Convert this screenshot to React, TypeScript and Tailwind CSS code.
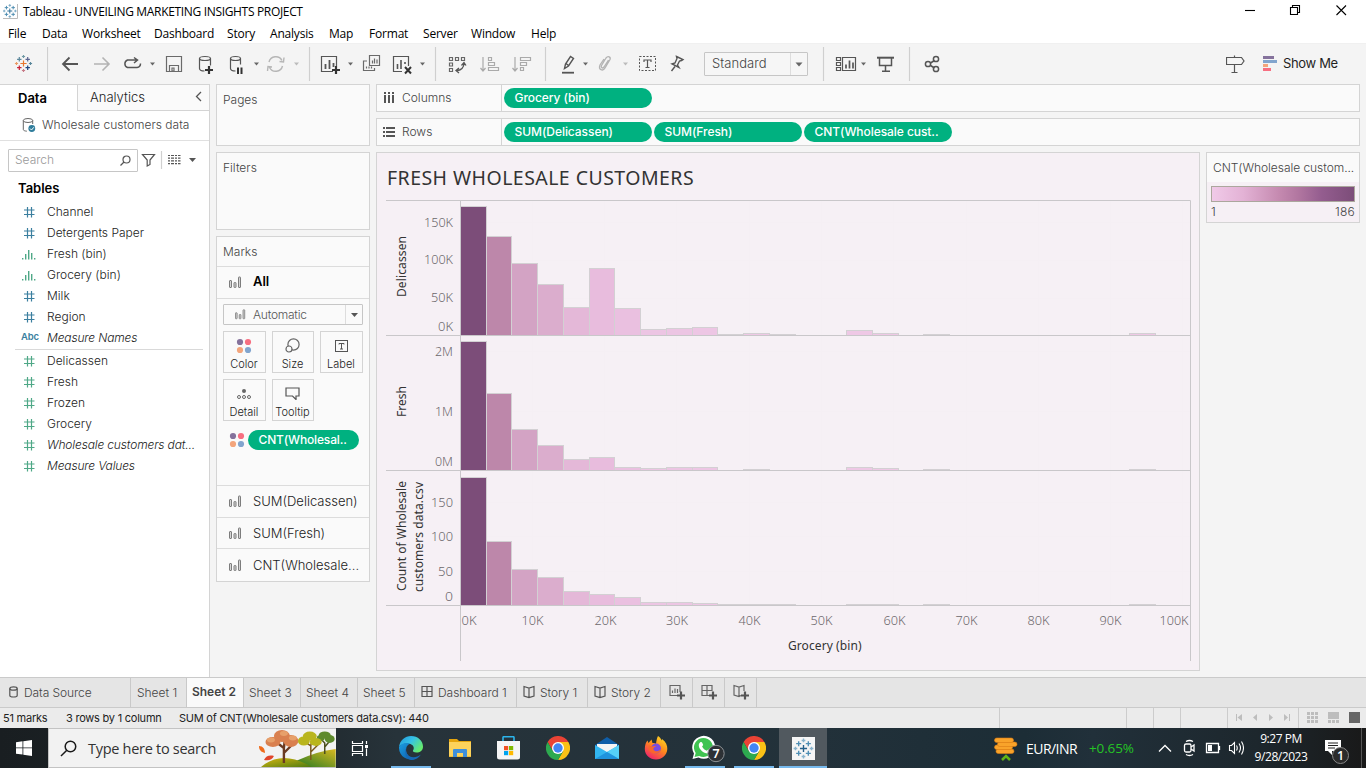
import React from "react";

const UI = "font-['Inter',sans-serif]";
const WIN = "font-['Open_Sans','Noto_Sans',sans-serif]";

/* ---------- shared marks ---------- */

function TableauMark({ cx, cy, s, colors }: { cx: number; cy: number; s: number; colors: string[] }) {
  const pts: [number, number, number][] = [
    [0, 0, 3.1], [-4.2, -4.2, 2.2], [4.2, -4.2, 2.2], [-4.2, 4.2, 2.2], [4.2, 4.2, 2.2],
    [0, -7, 1.6], [0, 7, 1.6], [-7, 0, 1.6], [7, 0, 1.6],
  ];
  return (
    <g strokeWidth={1.2 * s}>
      {pts.map(([x, y, r], i) => (
        <path
          key={i}
          stroke={colors[i % colors.length]}
          d={`M${cx + (x - r) * s} ${cy + y * s}h${2 * r * s}M${cx + x * s} ${cy + (y - r) * s}v${2 * r * s}`}
        />
      ))}
    </g>
  );
}

function BarsIcon({ className = "" }: { className?: string }) {
  return (
    <svg width="13" height="13" viewBox="0 0 13 13" fill="#d5d5d5" stroke="#7d7d7d" className={className}>
      <rect x="0.5" y="4.500" width="2" height="7" rx="0.500" />
      <rect x="5" y="6.500" width="2" height="5" rx="0.500" />
      <rect x="9.500" y="1" width="2" height="10.500" rx="0.500" />
    </svg>
  );
}

function ColorDots() {
  return (
    <svg width="16" height="16" viewBox="0 0 16 16">
      <circle cx="4" cy="4" r="3.100" fill="#85729c" />
      <circle cx="12" cy="4" r="3.100" fill="#f76f81" />
      <circle cx="4" cy="12" r="3.100" fill="#f3a57c" />
      <circle cx="12" cy="12" r="3.100" fill="#82a5ce" />
    </svg>
  );
}

/* ---------- toolbar ---------- */

function Tool({ x, w, color = "#555555", children }: { x: number; w: number; color?: string; children?: React.ReactNode }) {
  return (
    <svg width={w} height="40" viewBox={`${x} 44 ${w} 40`} fill="none" stroke={color} strokeWidth="1.2" className="shrink-0">
      {children}
    </svg>
  );
}

function Caret({ x, y = 64, color = "#666" }: { x: number; y?: number; color?: string }) {
  return <path d={`M${x - 2.5} ${y - 1.5}h5l-2.500 3z`} fill={color} stroke="none" />;
}

function Toolbar() {
  return (
    <div className="flex h-[41px] shrink-0 items-stretch border-t border-[#f0f0f0] bg-[#f4f4f4]">
      <Tool x={0} w={47}>
        <TableauMark cx={23.500} cy={63.500} s={1} colors={["#e8762d", "#5b879b", "#5b6591", "#c72035", "#1f457e", "#7099a5", "#c77a87", "#eb9a63", "#59879b"]} />
      </Tool>
      <Tool x={47} w={43}>
        <path d="M47.500 47v34" stroke="#cfcfcf" />
        <path d="M78 64H63M69.500 57.500L63 64l6.500 6.500" strokeWidth="1.800" />
      </Tool>
      <Tool x={90} w={27} color="#b3b3b3">
        <path d="M94 64h15M102.500 57.500L109 64l-6.500 6.500" strokeWidth="1.600" />
      </Tool>
      <Tool x={117} w={43}>
        <path d="M137 60h-9.500a4 4 0 0 0 0 7.500h9.500a4 4 0 0 0 3.500-4M134 57.500l3.500 2.500-3.500 3" strokeWidth="1.500" />
        <Caret x={152.500} />
      </Tool>
      <Tool x={160} w={30} color="#6a6a6a">
        <path d="M166.500 56.500h15v15h-15zM169.500 71v-5.500h9V71M172 68h2v3h-2z" />
      </Tool>
      <Tool x={190} w={32}>
        <path d="M199.500 58.500v10c0 1.500 2 2.500 5 2.500M210.500 58.500v7" />
        <ellipse cx="205" cy="58.500" rx="5.500" ry="2" />
        <path d="M209 66v8M205 70h8" strokeWidth="2.200" stroke="#333" />
      </Tool>
      <Tool x={222} w={41}>
        <path d="M230.500 58.500v10c0 1.500 2 2.500 5 2.500M240.500 58.500v6" />
        <ellipse cx="235.500" cy="58.500" rx="5" ry="2" />
        <path d="M238 67.500v6.500M241.500 67.500v6.500" strokeWidth="2" stroke="#333" />
        <Caret x={256.500} />
      </Tool>
      <Tool x={263} w={40} color="#b6b6b6">
        <path d="M269 62a7 7 0 0 1 13-1.500M282.500 66a7 7 0 0 1-13 1.500M279.500 61.500l4 .5.500-4.500M272 67l-4-.5-.5 4.500" strokeWidth="1.400" />
        <Caret x={296.500} color="#bbb" />
      </Tool>
      <Tool x={303} w={53}>
        <path d="M309.500 47v34" stroke="#cfcfcf" />
        <path d="M333 71.500h-11.500v-15h15V66" />
        <path d="M325.500 69v-5M329.500 69v-9M333.500 67v-4" strokeWidth="1.800" />
        <path d="M336 66v8M332 70h8" strokeWidth="2.200" stroke="#333" />
        <Caret x={350.500} />
      </Tool>
      <Tool x={356} w={30} color="#6a6a6a">
        <path d="M369.500 55.500h10v10h-10zM367 61h-3.500v9.500h11V68M372.500 63.500v-3M374.500 63.500v-5M377 63.500v-4M366.500 68.500v-2M369 68.500v-2M371.500 68.500v-2" />
      </Tool>
      <Tool x={386} w={44}>
        <path d="M402 71.500h-8.500v-15h15V66" />
        <path d="M397.500 69v-5M401 69v-9M405 64v-2" strokeWidth="1.600" />
        <path d="M405 67l6 6.500M411 67l-6 6.500" strokeWidth="2" stroke="#333" />
        <Caret x={422.500} />
      </Tool>
      <Tool x={430} w={43}>
        <path d="M435.500 47v34" stroke="#cfcfcf" />
        <path d="M449.500 57.500h3v3h-3zM455.500 57.500h3v3h-3zM461.500 57.500h3v3h-3zM449.500 63h3v3h-3zM449.500 68.500h3v3h-3z" stroke="#666" />
        <path d="M464 63.500c0 4-3 7-7 7M461.500 65.500l2.500-3 2 3M459 68l-3 2.500 3 2.500" strokeWidth="1.300" />
      </Tool>
      <Tool x={473} w={33} color="#aaa">
        <path d="M483 57v14M480.500 68l2.500 3 2.500-3M488.500 57.500h3v3h-3zM488.500 62.500h6v3h-6zM488.500 67.500h10v3h-10z" />
      </Tool>
      <Tool x={506} w={44} color="#aaa">
        <path d="M515 57v14M512.500 68l2.500 3 2.500-3M520.500 57.500h10v3h-10zM520.500 62.500h6v3h-6zM520.500 67.500h3v3h-3z" />
        <path d="M545.500 47v34" stroke="#cfcfcf" />
      </Tool>
      <Tool x={550} w={43}>
        <path d="M564.500 68.500l1-4.500 5-7.500 3 2-5 7.500zM566 63.500l2.500 2" strokeWidth="1.400" />
        <path d="M562 72.700h12" strokeWidth="1.800" />
        <Caret x={585.500} />
      </Tool>
      <Tool x={593} w={41} color="#b3b3b3">
        <path d="M608.500 60l-4.500 7c-1.500 2-3.500.5-2.500-1.500l4.500-7.500c2-2.500 5-1 4 1.500l-5 8.500c-2 3.500-7 2-5-3l4-6" strokeWidth="1.300" />
        <Caret x={625.500} color="#bbb" />
      </Tool>
      <Tool x={634} w={29}>
        <rect x="639.500" y="56.500" width="16" height="14" strokeDasharray="2 1.500" strokeWidth="1" />
        <path d="M644 62v-2h7v2M647.500 60v7.500M645.500 67.500h4" />
      </Tool>
      <Tool x={663} w={41}>
        <path d="M676.500 56.500l6.500 3-1.500 1-2 .5-2 4 1.500 2.500-7-3.500 3-1 2-4.500zM675 66.500l-3.500 4.500" strokeWidth="1.400" />
      </Tool>
      <div className="mt-[8px] flex h-6 w-[104px] items-center rounded-[1px] border border-[#c6c6c6] bg-[#f6f6f6] pb-px text-[13px]">
        <span className="w-[85px] pl-[7px] tracking-[0.05px] font-light text-[#444]">Standard</span>
        <svg width="17" height="22" viewBox="0 0 17 22"><path d="M0.500 0v22" stroke="#ddd" /><path d="M5.500 9.500h7l-3.500 4z" fill="#666" /></svg>
      </div>
      <Tool x={808} w={62}>
        <path d="M823.500 47v34" stroke="#cfcfcf" />
        <path d="M836.500 57.500h4v3h-4zM836.500 62.500h4v3h-4zM836.500 67.500h4v3h-4zM842.500 57.500h13v13h-13z" />
        <path d="M846 68.500v-4M849.500 68.500v-8M853 68.500v-6" strokeWidth="1.700" />
        <Caret x={863.500} />
      </Tool>
      <Tool x={870} w={33}>
        <path d="M877 57.700h17" strokeWidth="2" />
        <path d="M879.500 58v7.500h12V58M885.500 65.500v5.500M882 71.200h8" strokeWidth="1.500" />
      </Tool>
      <Tool x={903} w={45}>
        <path d="M909.500 47v34" stroke="#cfcfcf" />
        <path d="M930.500 63l4-2.500M930.500 65.500l4 2.500" strokeWidth="1.500" />
        <g strokeWidth="1.500"><circle cx="928" cy="64" r="2.600" /><circle cx="936" cy="59" r="2.600" /><circle cx="936" cy="69" r="2.600" /></g>
      </Tool>
      <Tool x={948} w={278} />
      <Tool x={1226} w={34}>
        <path d="M1226.500 57.500h15l2.500 3.500-2.500 3.500h-15zM1234.500 55.500v2M1234.500 64.500v8M1231.500 72.500h6" strokeWidth="1.200" />
      </Tool>
      <Tool x={1260} w={23}>
        <g stroke="none">
          <path d="M1263 56h11v3h-11z" fill="#85729c" /><path d="M1263 60h14v3h-14z" fill="#82a5ce" />
          <path d="M1263 64h5v3h-5z" fill="#f3a57c" /><path d="M1263 68h8v3h-8z" fill="#f76f81" />
        </g>
      </Tool>
      <span className="pt-[9px] text-[13px] leading-5 tracking-[-0.350px] text-[#1f1f1f]">Show Me</span>
    </div>
  );
}

/* ---------- data pane ---------- */

type Kind = "dim" | "mea" | "bin" | "abc";

function FieldIcon({ kind }: { kind: Kind }) {
  if (kind === "abc") return <span className="w-[26px] text-[9.500px] font-semibold not-italic text-[#3b7f9f]">Abc</span>;
  if (kind === "bin")
    return (
      <svg width="26" height="14" viewBox="0 0 26 14" stroke="#4fa887" strokeWidth="1.400">
        <path d="M1.700 11v1.500M4.700 7v5.500M7.700 3v9.500M10.700 6v6.500M13.700 11v1.500" />
      </svg>
    );
  return (
    <svg width="26" height="14" viewBox="0 0 26 14" stroke={kind === "dim" ? "#3b7f9f" : "#4fa887"} strokeWidth="1.200">
      <path d="M3 5h10.500M3 9.500h10.500M6.500 2v10.500M10.500 2v10.500" />
    </svg>
  );
}

function Field({ kind, name, italic }: { kind: Kind; name: string; italic?: boolean }) {
  return (
    <div className={`flex h-[21px] items-center pl-[21px] text-[12px] text-[#1c1c1c] ${italic ? "italic tracking-[-0.150px]" : "tracking-[0px]"}`}>
      <FieldIcon kind={kind} />
      <span className="font-light whitespace-nowrap">{name}</span>
    </div>
  );
}

function DataPane() {
  return (
    <div className="flex w-[210px] shrink-0 flex-col border-t border-r border-[#d4d4d4] bg-white">
      <div className="flex h-[26px] shrink-0 text-[13px]">
        <div className="w-[77px] pl-[18px] text-[13px] leading-[26px] font-semibold text-black">Data</div>
        <div className="flex flex-1 items-center justify-between border-b border-l border-[#d4d4d4] bg-[#fafafa] pr-[7px] pl-3 text-[#222]">
          <span className="font-light">Analytics</span>
          <svg width="7" height="11" viewBox="0 0 7 11" fill="none" stroke="#555" strokeWidth="1.300" className="mb-0.5"><path d="M6 1L1.500 5.500 6 10" /></svg>
        </div>
      </div>
      <div className="flex h-[30px] shrink-0 items-center border-b border-[#e0e0e0] pb-px pl-[22px] text-[12px] text-[#444]">
        <svg width="14" height="16" viewBox="0 0 14 16" fill="none" stroke="#666" className="mr-1.5">
          <ellipse cx="6" cy="3.500" rx="4.700" ry="2" /><path d="M1.300 3.500v9c0 1 1.500 1.500 3.500 1.700M10.700 3.500V7" />
          <circle cx="9.800" cy="11.500" r="3.400" fill="#2f7d9c" stroke="none" /><path d="M8 11.500l1.500 1.500 2.300-2.700" stroke="#fff" />
        </svg>
        <span className="font-light">Wholesale customers data</span>
      </div>
      <div className="mt-[7px] flex h-6 shrink-0 items-center pl-2">
        <div className="flex h-[23px] w-[130px] items-center justify-between rounded-[1px] border border-[#c6c6c6] pr-1.5 pl-1.5 text-[12px] text-[#999]">
          <span className="font-light">Search</span>
          <svg width="11" height="11" viewBox="0 0 11 11" fill="none" stroke="#555" strokeWidth="1.200"><circle cx="6.500" cy="4.500" r="3.500" /><path d="M4 7L.5 10.500" /></svg>
        </div>
        <svg width="65" height="24" viewBox="138 148 65 24" fill="none" stroke="#555" strokeWidth="1.200">
          <path d="M142.500 154.500h12l-4.500 5.500v4.500l-2.800 1.500v-6z" />
          <path d="M161.500 151v18" stroke="#d0d0d0" />
          <path d="M168 155.500h12.500M168 158.200h12.500M168 160.900h12.500M168 163.600h12.500" strokeDasharray="2 1 3 1" />
          <path d="M189 158h7l-3.500 4z" fill="#555" stroke="none" />
        </svg>
      </div>
      <div className="mt-[5px] h-[24px] pl-[18px] text-[13px] leading-[22px] font-semibold text-black">Tables</div>
      <Field kind="dim" name="Channel" />
      <Field kind="dim" name="Detergents Paper" />
      <Field kind="bin" name="Fresh (bin)" />
      <Field kind="bin" name="Grocery (bin)" />
      <Field kind="dim" name="Milk" />
      <Field kind="dim" name="Region" />
      <Field kind="abc" name="Measure Names" italic />
      <div className="mt-px mr-[6px] ml-[15px] h-px shrink-0 bg-[#d9d9d9]" />
      <Field kind="mea" name="Delicassen" />
      <Field kind="mea" name="Fresh" />
      <Field kind="mea" name="Frozen" />
      <Field kind="mea" name="Grocery" />
      <Field kind="mea" name="Wholesale customers dat..." italic />
      <Field kind="mea" name="Measure Values" italic />
    </div>
  );
}

/* ---------- shelves and marks card ---------- */

const card = "border border-[#d4d4d4] bg-[#fafafa]";

function MarkButton({ label, children }: { label: string; children: React.ReactNode }) {
  return (
    <div className="flex h-[42px] flex-col items-center border border-[#d4d4d4] bg-[#fafafa] pr-px">
      <div className="flex h-[25px] items-center pt-0.5">{children}</div>
      <span className="text-[11px] leading-[14px] font-light text-[#1c1c1c]">{label}</span>
    </div>
  );
}

function MarksCard() {
  return (
    <div className={`flex h-[346px] flex-col ${card}`}>
      <div className="h-[30px] shrink-0 border-b border-[#dcdcdc] pl-[6px] text-[12px] leading-[29px] font-light text-[#444]">Marks</div>
      <div className="flex h-8 shrink-0 items-center border-b border-[#dcdcdc] pb-px pl-3 text-[13px] font-semibold text-black">
        <BarsIcon className="mr-[11px]" />All
      </div>
      <div className="h-[187px] shrink-0 border-b border-[#dcdcdc] px-1.5 pt-[5px]">
        <div className="flex h-[21px] items-center rounded-[1px] border border-[#c6c6c6] pl-[11px] text-[12px] text-[#555]">
          <BarsIcon className="mr-[7px] w-[11px]" />
          <span className="w-[91px] font-light tracking-[-0.250px]">Automatic</span>
          <svg width="18" height="19" viewBox="0 0 18 19"><path d="M1.500 0v19" stroke="#ddd" /><path d="M7 8h7l-3.500 4z" fill="#555" /></svg>
        </div>
        <div className="mt-1.5 grid grid-cols-[43px_42px_43px] gap-1.5">
          <MarkButton label="Color"><ColorDots /></MarkButton>
          <MarkButton label="Size">
            <svg width="15" height="15" viewBox="0 0 15 15" fill="none" stroke="#666" strokeWidth="1.200"><circle cx="8.500" cy="6.500" r="5.600" /><circle cx="4" cy="11" r="3" fill="#fafafa" /></svg>
          </MarkButton>
          <MarkButton label="Label">
            <svg width="13" height="12" viewBox="0 0 13 12" fill="none" stroke="#555"><rect x="0.500" y="0.500" width="12" height="11" /><path d="M4 4.500v-1h5v1M6.500 3.500V9M5 9h3" /></svg>
          </MarkButton>
          <MarkButton label="Detail">
            <svg width="14" height="12" viewBox="0 0 14 12" fill="none" stroke="#666"><circle cx="7" cy="3" r="2" fill="#666" stroke="none" /><circle cx="2" cy="9" r="1.500" /><circle cx="7" cy="9" r="1.500" /><circle cx="12" cy="9" r="1.500" /></svg>
          </MarkButton>
          <MarkButton label="Tooltip">
            <svg width="15" height="13" viewBox="0 0 15 13" fill="none" stroke="#555" strokeWidth="1.200"><path d="M1 1h13v8h-3v3.500L7.500 9H1z" /></svg>
          </MarkButton>
        </div>
        <div className="mt-[9px] flex h-5 items-center pl-1.5">
          <ColorDots />
          <div className="ml-[3px] h-5 w-[111px] rounded-full bg-[#00b180] pl-[10.500px] text-[12px] leading-5 font-medium tracking-[-0.150px] text-white">CNT(Wholesal..</div>
        </div>
      </div>
      {["SUM(Delicassen)", "SUM(Fresh)", "CNT(Wholesale..."].map((t, i) => (
        <div key={t} className={`flex h-8 items-center pt-px pl-3 text-[13px] text-[#1c1c1c] ${i < 2 ? "border-b border-[#dcdcdc]" : ""}`}>
          <BarsIcon className="mr-[11px]" /><span className="font-light">{t}</span>
        </div>
      ))}
    </div>
  );
}

function Pill({ children }: { children: React.ReactNode }) {
  return <div className="h-5 w-[148px] rounded-full bg-[#00b180] pl-[10.500px] text-[12px] leading-5 font-medium tracking-[-0.060px] text-white">{children}</div>;
}

function Shelf({ label, icon, pills }: { label: string; icon: React.ReactNode; pills: string[] }) {
  return (
    <div className={`flex h-7 items-center ${card}`}>
      <div className="flex h-full w-[125px] items-center border-r border-[#d4d4d4] pl-1.5 text-[12px] font-light text-[#444]">{icon}{label}</div>
      <div className="flex gap-0.5 pl-0.5">{pills.map((p) => <Pill key={p}>{p}</Pill>)}</div>
    </div>
  );
}

/* ---------- chart ---------- */

const EDGES = [460.5, 486.5, 511.5, 537.5, 563.5, 589.5, 614.5, 640.5, 666.5, 692.5, 717.5, 743.5, 769.5, 795.5];
const FILLS = ["#7c4d79", "#bd87aa", "#d3a3c4", "#dbadcd", "#e4b8d8", "#e8bcdd", "#eac0e0", "#ecc5e3", "#ecc5e3", "#edc6e4", "#eec8e5", "#eec8e5", "#eec8e5"];
const TAIL: [number, number][] = [[846.5, 872.5], [872.5, 898.5], [923.5, 949.5], [1129.5, 1155.5]];

const PANES = [
  { base: 335.5, tops: [206.5, 236.5, 263.5, 284.5, 307.5, 268.5, 308.5, 329.5, 328.5, 327.5, 334.5, 333.5, 334.5], tail: [330.5, 333.5, 334.5, 333.5] },
  { base: 470.5, tops: [341.5, 393.5, 429.5, 445.5, 459.5, 457.5, 467.5, 468.5, 467.5, 467.5, 470.5, 469.5, 470.5], tail: [467.5, 468.5, 469.5, 469.5] },
  { base: 605.5, tops: [477.5, 541.5, 569.5, 577.5, 591.5, 594.5, 597.5, 602.5, 602.5, 603.5, 604.5, 604.5, 604.5], tail: [604.5, 604.5, 604.5, 604.5] },
];

const Y_TICKS: [string, number, number][] = [
  ["150K", 227, 29], ["100K", 264, 29], ["50K", 302, 22], ["0K", 331, 15],
  ["2M", 356, 18], ["1M", 416, 18], ["0M", 466, 18],
  ["150", 507, 22], ["100", 541, 22], ["50", 576, 15], ["0", 601, 8],
];
const X_TICKS: [string, number, number][] = [
  ["0K", 461.5, 15], ["10K", 521.5, 22], ["20K", 594.5, 22], ["30K", 666, 22], ["40K", 738.5, 22], ["50K", 810.5, 22],
  ["60K", 883.5, 22], ["70K", 955.5, 22], ["80K", 1027.5, 22], ["90K", 1099.5, 22], ["100K", 1159.5, 29],
];

function Chart() {
  const bars = PANES.flatMap(({ base, tops, tail }) => [
    ...tops.map((y, i) => ({ x0: EDGES[i], x1: EDGES[i + 1], y, base, fill: FILLS[i] })),
    ...tail.map((y, i) => ({ x0: TAIL[i][0], x1: TAIL[i][1], y, base, fill: "#eec8e5" })),
  ]);
  return (
    <svg width="806" height="462" viewBox="386 200 806 462" className="ml-[9px] font-['Noto_Sans',sans-serif] text-[12.500px]">
      <g stroke="#f5eff4">
        {[532.5, 604.5, 676.5, 749.5, 821.5, 893.5, 966.5, 1038.5, 1110.5, 1182.5].map((x) => <path key={x} d={`M${x} 201V605`} />)}
        {[222.5, 260.5, 298.5, 351.5, 411.5, 502.5, 536.5, 571.5].map((y) => <path key={y} d={`M461 ${y}H1190`} />)}
      </g>
      <g stroke="#d3d0d3">
        {bars.filter((b) => b.y < b.base).map((b, i) => (
          <rect key={i} x={b.x0} y={b.y} width={b.x1 - b.x0} height={b.base - b.y} fill={b.fill} />
        ))}
      </g>
      <path d="M386 200.500H1190.500V661M386 335.500h804M386 470.500h804M386 605.500h804M460.500 200V661" stroke="#c9c7ca" fill="none" />
      <g fill="#6b676b" className="font-light">
        {Y_TICKS.map(([t, y, w]) => <text key={t + y} x={453} y={y} textAnchor="end" textLength={w} lengthAdjust="spacingAndGlyphs">{t}</text>)}
        {X_TICKS.map(([t, x, w]) => <text key={t} x={x} y={625} textLength={w} lengthAdjust="spacingAndGlyphs">{t}</text>)}
      </g>
      <g fill="#333333" className="text-[12px]">
        <text x="788" y="650" textLength="73.500">Grocery (bin)</text>
        <text transform="translate(406 297) rotate(-90)" textLength="61">Delicassen</text>
        <text transform="translate(406 417) rotate(-90)" textLength="31">Fresh</text>
        <text transform="translate(406 591) rotate(-90)" textLength="110">Count of Wholesale</text>
        <text transform="translate(423 592) rotate(-90)" textLength="110">customers data.csv</text>
      </g>
    </svg>
  );
}

/* ---------- bottom tabs & status ---------- */

const BookIcon = () => <path d="M1 1.500l5 1.500 5-1.500v9.500l-5 1.500-5-1.500zM6 3v9.500" />;
const GridIcon = () => <path d="M1 1.500h10v10H1zM6 1.500v10M1 6.500h10" />;

function Tab({ className, icon, label }: { className: string; icon?: React.ReactNode; label: string }) {
  return (
    <div className={`flex h-full items-center border-r border-[#c9c9c9] text-[12px] ${className}`}>
      {icon && <svg width="13" height="14" viewBox="0 0 13 14" fill="none" stroke="#555" strokeWidth="1.200" className="mr-1 -mt-px">{icon}</svg>}
      <span className="whitespace-nowrap">{label}</span>
    </div>
  );
}

function SheetTabs() {
  return (
    <div className="flex h-[31px] shrink-0 border-t border-b border-[#cacaca] bg-[#e5e5e5] font-light tracking-[-0.020px] text-[#444]">
      <Tab className="w-[131px] pl-[7px] tracking-[-0.080px]" label="Data Source" icon={<><ellipse cx="6.500" cy="3.500" rx="3.700" ry="1.700" /><path d="M2.800 3.500v7c0 2 7.400 2 7.400 0v-7" /></>} />
      <Tab className="w-[56px] pl-[6px]" label="Sheet 1" />
      <Tab className="w-[57px] bg-[#fafafa] pb-0.5 pl-[5px] font-semibold" label="Sheet 2" />
      <Tab className="w-[57px] pl-[5px]" label="Sheet 3" />
      <Tab className="w-[57px] pl-[5px]" label="Sheet 4" />
      <Tab className="w-[57px] pl-[5px]" label="Sheet 5" />
      <Tab className="w-[102px] pl-1.5" label="Dashboard 1" icon={<GridIcon />} />
      <Tab className="w-[71px] pl-1.5" label="Story 1" icon={<BookIcon />} />
      <Tab className="w-[73px] pl-1.5" label="Story 2" icon={<BookIcon />} />
      {[0, 1, 2].map((i) => (
        <div key={i} className="flex w-8 items-center border-r border-[#c9c9c9] pl-2">
          <svg width="17" height="17" viewBox="0 0 17 17" fill="none" stroke="#666" strokeWidth="1.200">
            {i === 0 && <path d="M9 11.500H1v-10h10V8M3.500 9V6.500M6 9V4.500M8.500 9V5" />}
            {i === 1 && <path d="M8 11.500H1v-10h10V7M6 1.500v10M1 6.500h10" />}
            {i === 2 && <path d="M8 11.500l-2 1-5-1.500V1.500L6 3l5-1.500V7M6 3v9.500" />}
            <path d="M12 7.500v8M8 11.500h8" strokeWidth="2.200" stroke="#555" />
          </svg>
        </div>
      ))}
    </div>
  );
}

function StatusBar() {
  return (
    <div className="flex h-5 shrink-0 items-center bg-[#ebebeb] text-[11px] tracking-[-0.230px] text-[#222]">
      <span className="w-[66px] pl-[3px]">51 marks</span>
      <span className="w-[113px]">3 rows by 1 column</span>
      <span className="w-[820px]">SUM of CNT(Wholesale customers data.csv): 440</span>
      <svg width="367" height="20" viewBox="999 708 367 20" fill="#bdbdbd" className="shrink-0">
        <path d="M999.500 708v20M1126.500 708v20M1153.500 708v20M1180.500 708v20M1227.500 708v20M1298.500 708v20" stroke="#cccccc" />
        <path d="M1236 714h1v7h-1zM1242 714v7l-4.500-3.500zM1257 714v7l-4-3.500zM1269 714v7l4-3.500zM1284 714v7l4-3.500zM1289 714h1v7h-1z" />
        {[0, 1, 2].flatMap((r) => [0, 1, 2].map((c) => <rect key={`${r}${c}`} x={1307 + c * 4} y={712 + r * 4} width="3" height="3" />))}
        <path d="M1328 712h11v7h-11zM1328 720h3v3h-3zM1332 720h3v3h-3zM1336 720h3v3h-3z" />
        <rect x="1349" y="712" width="11" height="11" fill="#666" />
      </svg>
    </div>
  );
}

/* ---------- taskbar ---------- */

function App48({ active, open, w = "w-[49px]", children }: { active?: boolean; open?: boolean; w?: string; children: React.ReactNode }) {
  return (
    <div className={`flex h-10 shrink-0 flex-col items-center ${w} ${active ? "bg-[#51595f]" : ""}`}>
      <div className="flex h-[38px] items-center pt-0.5">{children}</div>
      {(open || active) && <div className={`h-0.5 bg-[#76b9ed] ${active ? "w-full" : "w-10"}`} />}
    </div>
  );
}

function ChromeIcon() {
  return (
    <svg width="24" height="24" viewBox="0 0 24 24">
      <path d="M6.800 15L1.600 6A12 12 0 0 1 22.400 6H12z" fill="#ea4335" />
      <path d="M17.200 15L12 24a12 12 0 0 0 10.400-18H12z" fill="#fbc116" />
      <path d="M6.800 15L1.600 6A12 12 0 0 0 12 24l5.200-9z" fill="#2da94f" />
      <circle cx="12" cy="12" r="6" fill="#fff" />
      <circle cx="12" cy="12" r="4.700" fill="#4285f4" />
    </svg>
  );
}

function Trees() {
  return (
    <svg width="78" height="38" viewBox="0 0 78 38">
      <defs>
        <linearGradient id="hill" x1="0" y1="0" x2="1" y2="1"><stop offset="0" stopColor="#d8b70f" /><stop offset="1" stopColor="#4f7c12" /></linearGradient>
        <linearGradient id="hill2" x1="0" y1="1" x2="1" y2="0"><stop offset="0" stopColor="#247a24" /><stop offset="1" stopColor="#d9b820" /></linearGradient>
      </defs>
      <path d="M38 32Q60 22 78 20V38H38z" fill="url(#hill2)" />
      <path d="M3 38Q24 20 54 38z" fill="url(#hill)" />
      <g fill="none" stroke="#6b3a22" strokeWidth="1.500">
        <path d="M26 34V19l-9-7M26 24l9-9M26 19l1-9" strokeWidth="2.400" />
        <path d="M53 31V17l-7-5M53 23l8-8M53 17l1-7" stroke="#7b5a1c" />
        <path d="M67 25V14l-4-4M67 18l5-6" stroke="#4c4f20" />
      </g>
      <g fill="#d9804f"><ellipse cx="15" cy="13" rx="7.500" ry="5" /><ellipse cx="33" cy="12" rx="7.500" ry="6" /><ellipse cx="24" cy="7" rx="8" ry="6" /></g>
      <g fill="#e7a06a"><ellipse cx="26" cy="4.500" rx="4" ry="2.500" /><ellipse cx="13" cy="11" rx="4" ry="2.500" /><ellipse cx="35" cy="9" rx="4" ry="2.500" /></g>
      <g fill="#5e8a2c"><ellipse cx="63" cy="9" rx="4" ry="3" /><ellipse cx="72" cy="10" rx="5" ry="4" /><ellipse cx="67" cy="6" rx="6" ry="3.500" /></g>
      <g fill="#b9b51d"><ellipse cx="46" cy="12" rx="6" ry="4.500" /><ellipse cx="58" cy="13" rx="6" ry="4" /><ellipse cx="52" cy="7" rx="7" ry="4.500" /></g>
      <path d="M1 17c4 0 6 3 6 7-4-1-6-3-6-7z" fill="#ef6b1b" /><path d="M6 31c2-4 5-5 10-4-2 4-5 5-10 4z" fill="#e0452a" />
    </svg>
  );
}

function Taskbar() {
  return (
    <div className={`flex h-10 shrink-0 items-stretch bg-[linear-gradient(90deg,#191e21_0%,#1e262a_20%,#27333a_29%,#22313a_60%,#1c2d36_75%,#21303a_80%,#1d272d_92%,#191919_100%)] text-white ${WIN}`}>
      <div className="flex w-12 items-center justify-center">
        <svg width="16" height="16" viewBox="0 0 16 16" fill="#fff"><path d="M0 2.200l6.500-.9v6.200H0zM7.300 1.200L16 0v7.500H7.300zM0 8.300h6.500v6.300L0 13.700zM7.300 8.300H16V16l-8.700-1.200z" /></svg>
      </div>
      <div className="flex w-[288px] items-center border border-r-0 border-[#c3c3c3] bg-[#f2f2f2] pl-[11px]">
        <svg width="17" height="17" viewBox="0 0 17 17" fill="none" stroke="#1a1a1a" strokeWidth="1.500"><circle cx="10.500" cy="6.500" r="5.300" /><path d="M6.800 10.200L1 16" /></svg>
        <span className="ml-[11px] w-[171px] pt-px text-[14.500px] tracking-[-0.280px] whitespace-nowrap text-[#333]">Type here to search</span>
        <Trees />
      </div>
      <App48 w="w-12">
        <svg width="18" height="17" viewBox="0 0 18 17" fill="none" stroke="#fff" strokeWidth="1.200"><path d="M1.500 1v2.500h10V1M1.500 16v-2.500h10V16M1.500 5.500h10v6h-10zM15.500 1v3M15.500 8.500V16" /><path d="M14 5h3v3h-3z" fill="#fff" stroke="none" /></svg>
      </App48>
      <App48 w="w-[54px]" open>
        <svg width="24" height="24" viewBox="0 0 24 24">
          <defs>
            <linearGradient id="ea" x1="0" y1="0" x2="1" y2="0.600"><stop offset="0" stopColor="#2196d8" /><stop offset="0.500" stopColor="#35c1e8" /><stop offset="1" stopColor="#66eb6e" /></linearGradient>
            <linearGradient id="eb" x1="0" y1="0" x2="1" y2="1"><stop offset="0" stopColor="#1b9de2" /><stop offset="1" stopColor="#0c59a4" /></linearGradient>
          </defs>
          <path d="M0 11C1 4 6 0 12 0c7 0 12 5 12 10.500 0 4-3 6-6.500 6-3 0-4-1.200-3.500-2 1.500-2 1-5-2.500-6.500C7 6.500 2 8 0 11z" fill="url(#ea)" />
          <path d="M0 11c2-3.500 7-4.800 11-3.200-3 1.200-4.500 4.200-4 7.200.6 4 4.500 7 9 8A12 12 0 0 1 0 12z" fill="url(#eb)" />
          <path d="M8.200 10.500c-1.500 2-1.500 5 0 7.500 2.500 4 9 4.500 13.500.500-2 4-6 5.500-9.700 5.500C6.500 22.500 4.500 15 8.200 10.500z" fill="#1668b5" />
        </svg>
      </App48>
      <App48 w="w-[43px]">
        <svg width="22" height="20" viewBox="0 0 22 20"><path d="M0 1h8l2 2h12v16H0z" fill="#e5a50d" /><path d="M0 4h22v14.500H0z" fill="#fdd35b" /><path d="M4 19v-7q0-1 1-1h12q1 0 1 1v7h-4v-4H8v4z" fill="#3f8fd9" /></svg>
      </App48>
      <App48 w="w-[54px]">
        <svg width="23" height="24" viewBox="0 0 23 24"><path d="M6 5V1.500q0-.8 1-.8h9q1 0 1 .8V5" fill="none" stroke="#2cb4ea" strokeWidth="1.600" /><path d="M0 5h23v16q0 2.500-2.500 2.500h-18Q0 23.500 0 21z" fill="#f5f5f5" /><path d="M7 10h4.200v4.200H7z" fill="#f25022" /><path d="M12 10h4.200v4.200H12z" fill="#7fba00" /><path d="M7 15h4.200v4.200H7z" fill="#00a4ef" /><path d="M12 15h4.200v4.200H12z" fill="#ffb900" /></svg>
      </App48>
      <App48 w="w-[45px]"><ChromeIcon /></App48>
      <App48 w="w-[53px]">
        <svg width="24" height="22" viewBox="0 0 24 22"><path d="M0 8L12 0l12 8v4H0z" fill="#0f5ea8" /><path d="M2 7h20v9H2z" fill="#f4f4f4" /><path d="M0 8l12 7L24 8v14H0z" fill="#32b5f0" /><path d="M24 8L12 15l12 7z" fill="#55d0f7" /><path d="M0 22h24L12 15z" fill="#1f93dd" /></svg>
      </App48>
      <App48 w="w-[45px]">
        <svg width="24" height="24" viewBox="0 0 24 24">
          <defs><linearGradient id="ff" x1="0.900" y1="0" x2="0.300" y2="1"><stop offset="0" stopColor="#ffe226" /><stop offset="0.500" stopColor="#ff8a1c" /><stop offset="1" stopColor="#f0246a" /></linearGradient></defs>
          <path d="M14 0c2 1 3 3 3.500 4.500L18 3c4 3 5.500 6.500 5.300 10C23 19 18 23.500 12 23.500S.8 19 .8 13C.8 9 2 6 3.500 4.500L4.500 7l3-3.500L8.500 7c2 0 3 .3 3.500 1 .5-4 1-6 2-8z" fill="url(#ff)" />
          <circle cx="12" cy="12.500" r="5" fill="#7a4be0" /><path d="M5 9c3 3 5 0 7 1.500-2 .5-3 1.500-2.500 3 1 2.500 5 2.500 7.500-.5-.5 5-10 7-12.500 0z" fill="#f9662b" />
        </svg>
      </App48>
      <App48 w="w-[53px]" open>
        <svg width="36" height="30" viewBox="0 0 36 30" className="mt-1 ml-[5px]">
          <path d="M3.500 24l1.500-5.500A11.500 11.500 0 1 1 9.500 22.600z" fill="#fff" />
          <path d="M5.500 22l1.200-4A9.500 9.500 0 1 1 10.200 21z" fill="#3fc351" />
          <path d="M11 7.500c2-1.500 2.500 1 3.200 2.500-.5 1-1 1.200-1 1.700 1 2 2.500 3.300 4.500 4 .6-.4 1-1.500 1.700-1.300l2.600 1.400c0 3-3.500 3.500-6.500 2-4-2-6.500-6-5.500-9z" fill="#fff" />
          <circle cx="27" cy="18.500" r="8.200" fill="#2d3135" stroke="#8d9296" />
          <text x="27" y="23" textAnchor="middle" fill="#fff" fontSize="12.500" className="font-['Noto_Sans',sans-serif] font-semibold">7</text>
        </svg>
      </App48>
      <App48 w="w-[45px]" open><ChromeIcon /></App48>
      <div className="w-[3px]" />
      <App48 w="w-12" active>
        <svg width="23" height="23" viewBox="0 0 23 23"><rect width="23" height="23" fill="#f5f5f5" /><TableauMark cx={11.500} cy={11.500} s={1.150} colors={["#24608a", "#4f8fb5", "#4f8fb5", "#4f8fb5", "#4f8fb5", "#88b3cc", "#88b3cc", "#88b3cc", "#88b3cc"]} /></svg>
      </App48>
      <div className="flex flex-1 items-center justify-end">
        <svg width="24" height="26" viewBox="0 0 24 26" className="mt-1"><g fill="#f9a32a" stroke="#d97a12" strokeWidth="0.600"><rect x="2" y="12" width="18" height="4.500" rx="2.200" /><rect x="0.500" y="8" width="18" height="4.500" rx="2.200" /><rect x="3.500" y="5" width="19.500" height="4.500" rx="2.200" /><rect x="0.500" y="1" width="19" height="4.500" rx="2.200" /></g><path d="M8 23l4-4 4 4" fill="none" stroke="#62b515" strokeWidth="2.500" /></svg>
        <span className="ml-2 w-[63px] pt-px text-[14px] tracking-[-0.550px] whitespace-nowrap">EUR/INR</span>
        <span className="w-[69px] pt-px text-[13.500px] tracking-[-0.120px] whitespace-nowrap text-[#25c425]">+0.65%</span>
        <svg width="86" height="24" viewBox="1158 736 86 24" fill="none" stroke="#fff" strokeWidth="1.300" className="mr-[8px]">
          <path d="M1159 751.500l6-6 6 6" />
          <rect x="1184.500" y="744" width="6.500" height="8" rx="1.500" /><path d="M1191 747l3-2v6l-3-2M1186 741.500q3.500-2 7 0M1186 754.500q3.500 2 7 0" />
          <path d="M1206.500 743.500h12v9h-12zM1219.500 746v4" /><path d="M1208 745h4v6h-4z" fill="#fff" stroke="none" />
          <path d="M1229.500 745.500h2l3-3v11l-3-3h-2zM1236.500 745.500q1.500 2.500 0 5M1239 743.500q3 4.500 0 9M1241.500 741.500q4 6.500 0 13" strokeWidth="1.100" />
        </svg>
        <div className="w-[64px] pr-[6px] text-center text-[12px] leading-[18px] tracking-[-0.450px] whitespace-nowrap"><div>9:27 PM</div><div>9/28/2023</div></div>
        <svg width="50" height="40" viewBox="1316 728 50 40"><path d="M1325 740h16v11h-9v4l-4-4h-3z" fill="#fff" /><path d="M1328 743h10M1328 745.500h10M1328 748h7" stroke="#222" /><circle cx="1340.500" cy="755.500" r="8" fill="#2b2b2b" stroke="#888" /><text x="1340.500" y="760" textAnchor="middle" fill="#fff" fontSize="12.500" className="font-semibold">1</text><path d="M1361.500 728v40" stroke="#555" /></svg>
      </div>
    </div>
  );
}

/* ---------- page ---------- */

export default function App() {
  return (
    <div className={`flex h-[768px] w-[1366px] flex-col overflow-hidden bg-[#f4f4f4] ${UI}`}>
      <div className={`flex h-[22px] shrink-0 items-center bg-white text-[12px] text-black ${WIN}`}>
        <svg width="15" height="15" viewBox="0 0 15 15" className="mr-[5px] ml-[3px]"><path d="M14.500 0v14.500H0" stroke="#bbb" fill="none" /><TableauMark cx={6.800} cy={7} s={0.800} colors={["#2a6e96", "#4a8bb0", "#4a8bb0", "#4a8bb0", "#4a8bb0", "#79a9c4", "#79a9c4", "#79a9c4", "#79a9c4"]} /></svg>
        <span className="flex-1 pt-px tracking-[-0.330px]">Tableau - UNVEILING MARKETING INSIGHTS PROJECT</span>
        <svg width="126" height="22" viewBox="1240 0 126 22" fill="none" stroke="#000" strokeWidth="1.100"><path d="M1245 10.500h10" /><path d="M1290.500 7.500h7v7h-7zM1292.500 7.500v-2h7v7h-2" /><path d="M1336.500 5.500l9.500 9.500M1346 5.500l-9.500 9.500" /></svg>
      </div>
      <div className={`flex h-[21px] shrink-0 items-center bg-white pt-[2px] pl-2 text-[12px] tracking-[-0.200px] text-black ${WIN}`}>
        <span className="w-[34px]">File</span><span className="w-[40px]">Data</span><span className="w-[72px]">Worksheet</span><span className="w-[73px]">Dashboard</span>
        <span className="w-[43px]">Story</span><span className="w-[59px]">Analysis</span><span className="w-[40px]">Map</span><span className="w-[54px]">Format</span>
        <span className="w-[48px]">Server</span><span className="w-[60px]">Window</span><span>Help</span>
      </div>
      <Toolbar />
      <div className="flex h-[593px] shrink-0">
        <DataPane />
        <div className="ml-[6px] flex w-[154px] shrink-0 flex-col gap-[6px]">
          <div className={`h-[62px] pt-[6px] pl-[6px] text-[12px] font-light text-[#444] ${card}`}>Pages</div>
          <div className={`h-[78px] pt-[6px] pl-[6px] text-[12px] font-light text-[#444] ${card}`}>Filters</div>
          <MarksCard />
        </div>
        <div className="ml-[6px] flex w-[984px] flex-col gap-[6px]">
          <Shelf label="Columns" pills={["Grocery (bin)"]} icon={<svg width="19" height="13" viewBox="0 0 19 13" fill="#555" className="mb-0.5"><path d="M1 1h2v2H1zM5 1h2v2H5zM9 1h2v2H9zM1 4h2v8H1zM5 4h2v8H5zM9 4h2v8H9z" /></svg>} />
          <Shelf label="Rows" pills={["SUM(Delicassen)", "SUM(Fresh)", "CNT(Wholesale cust.."]} icon={<svg width="19" height="13" viewBox="0 0 19 13" fill="#555" className="mb-0.5"><path d="M0 2h2v2H0zM0 6h2v2H0zM0 10h2v2H0zM3 2h9v2H3zM3 6h9v2H3zM3 10h9v2H3z" /></svg>} />
          <div className="flex items-start gap-[6px]">
            <div className="h-[519px] w-[824px] border border-[#d4d4d4] bg-[#f6f0f5]">
              <h1 className="h-[47px] pl-[10px] font-['Noto_Sans',sans-serif] text-[19.500px] leading-[50px] tracking-[0.450px] text-[#333]">FRESH WHOLESALE CUSTOMERS</h1>
              <Chart />
            </div>
            <div className="h-[71px] w-[154px] border border-[#d4d4d4] bg-[#f6f0f5] text-[12px] font-light">
              <div className="h-[29px] bg-[#fafafa] pl-[6px] leading-[30px] tracking-[-0.050px] whitespace-nowrap text-[#444]">CNT(Wholesale custom...</div>
              <div className="mx-1 mt-1 h-4 border border-[#aba79d] bg-[linear-gradient(90deg,#f0cae8_0%,#e3b2d5_22%,#c58ab0_47%,#b176a0_61%,#945d8f_77%,#7c4d79_100%)]" />
              <div className="flex justify-between px-[4px] pt-px text-[#444]"><span>1</span><span className="tracking-[0.200px]">186</span></div>
            </div>
          </div>
        </div>
      </div>
      <SheetTabs />
      <StatusBar />
      <Taskbar />
    </div>
  );
}
